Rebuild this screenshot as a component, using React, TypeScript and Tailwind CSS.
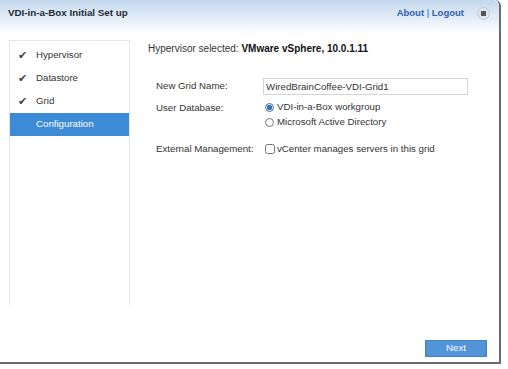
import { useState } from 'react'

const steps = [
  { label: 'Hypervisor', done: true },
  { label: 'Datastore', done: true },
  { label: 'Grid', done: true },
  { label: 'Configuration', done: false, active: true },
]

export default function App() {
  const [gridName, setGridName] = useState('WiredBrainCoffee-VDI-Grid1')
  const [db, setDb] = useState('workgroup')
  const [vcenter, setVcenter] = useState(false)

  return (
    <div
      className="w-[508px] h-[369px] bg-white text-[9.7px] text-[#333]"
      style={{ fontFamily: '"Liberation Sans", Arial, sans-serif' }}
    >
      <div className="w-[501px] h-[364px] border-r-[2px] border-b-[2px] border-[#6b6b6b] rounded-tr-[6px] flex flex-col bg-white">
        {/* header */}
        <div className="h-[34px] shrink-0 flex items-start justify-between pl-[8px] pr-[9px] pt-[6px] bg-gradient-to-b from-[#c4d9ee] to-white rounded-tr-[6px]">
          <span className="font-bold text-[9.8px] text-[#1f2a36]">VDI-in-a-Box Initial Set up</span>
          <div className="flex items-center gap-[13px]">
            <span className="text-[#2b62b0] text-[9.5px] font-bold">
              About <span className="font-normal">|</span> Logout
            </span>
            <span className="w-[13px] h-[13px] rounded-full bg-[#dfe4ea] border border-[#c4ccd4] flex items-center justify-center">
              <span className="w-[5px] h-[5px] bg-[#555]" />
            </span>
          </div>
        </div>

        <div className="flex flex-1 pt-[6px]">
          {/* steps */}
          <div className="ml-[9px] w-[121px] h-[265px] border-x border-t border-[#e6e6e6] pt-[3px]">
            {steps.map((s) => (
              <div
                key={s.label}
                className={
                  s.active
                    ? 'h-[23px] flex items-center pl-[26px] bg-[#3d8bd6] text-white'
                    : 'h-[23px] flex items-center pl-[8px] text-[#333]'
                }
              >
                {s.done && <span className="w-[18px] text-[11px] text-[#444]">✔</span>}
                <span>{s.label}</span>
              </div>
            ))}
          </div>

          {/* form */}
          <div className="flex-1 flex flex-col pl-[18px]">
            <div className="mt-[1px] text-[10px]">
              Hypervisor selected: <span className="font-bold text-[#111]">VMware vSphere, 10.0.1.11</span>
            </div>

            <div className="mt-[22px] ml-[8px] flex flex-col">
              <div className="flex items-center h-[17px]">
                <span className="w-[107px]">New Grid Name:</span>
                <input
                  value={gridName}
                  onChange={(e) => setGridName(e.target.value)}
                  className="w-[205px] h-[17px] border border-[#d4d4d4] px-[2px] text-[9.7px] text-[#333] outline-none"
                />
              </div>

              <div className="flex mt-[5px]">
                <span className="w-[109px] leading-[15px]">User Database:</span>
                <div className="flex flex-col">
                  <label className="flex items-center gap-[3px] h-[15px]">
                    <input
                      type="radio"
                      name="db"
                      checked={db === 'workgroup'}
                      onChange={() => setDb('workgroup')}
                      className="w-[9px] h-[9px] m-0 accent-[#3d6fb0]"
                    />
                    VDI-in-a-Box workgroup
                  </label>
                  <label className="flex items-center gap-[3px] h-[15px]">
                    <input
                      type="radio"
                      name="db"
                      checked={db === 'ad'}
                      onChange={() => setDb('ad')}
                      className="w-[9px] h-[9px] m-0 accent-[#3d6fb0]"
                    />
                    Microsoft Active Directory
                  </label>
                </div>
              </div>

              <div className="flex items-center mt-[12px] h-[15px]">
                <span className="w-[109px]">External Management:</span>
                <label className="flex items-center gap-[2px]">
                  <input
                    type="checkbox"
                    checked={vcenter}
                    onChange={(e) => setVcenter(e.target.checked)}
                    className="w-[10px] h-[10px] m-0"
                  />
                  vCenter manages servers in this grid
                </label>
              </div>
            </div>

            <div className="mt-auto mb-[5px] mr-[12px] flex justify-end">
              <button className="w-[62px] h-[17px] bg-[#5294d8] border border-[#4282c4] text-white text-[9.7px]">
                Next
              </button>
            </div>
          </div>
        </div>
      </div>
    </div>
  )
}
